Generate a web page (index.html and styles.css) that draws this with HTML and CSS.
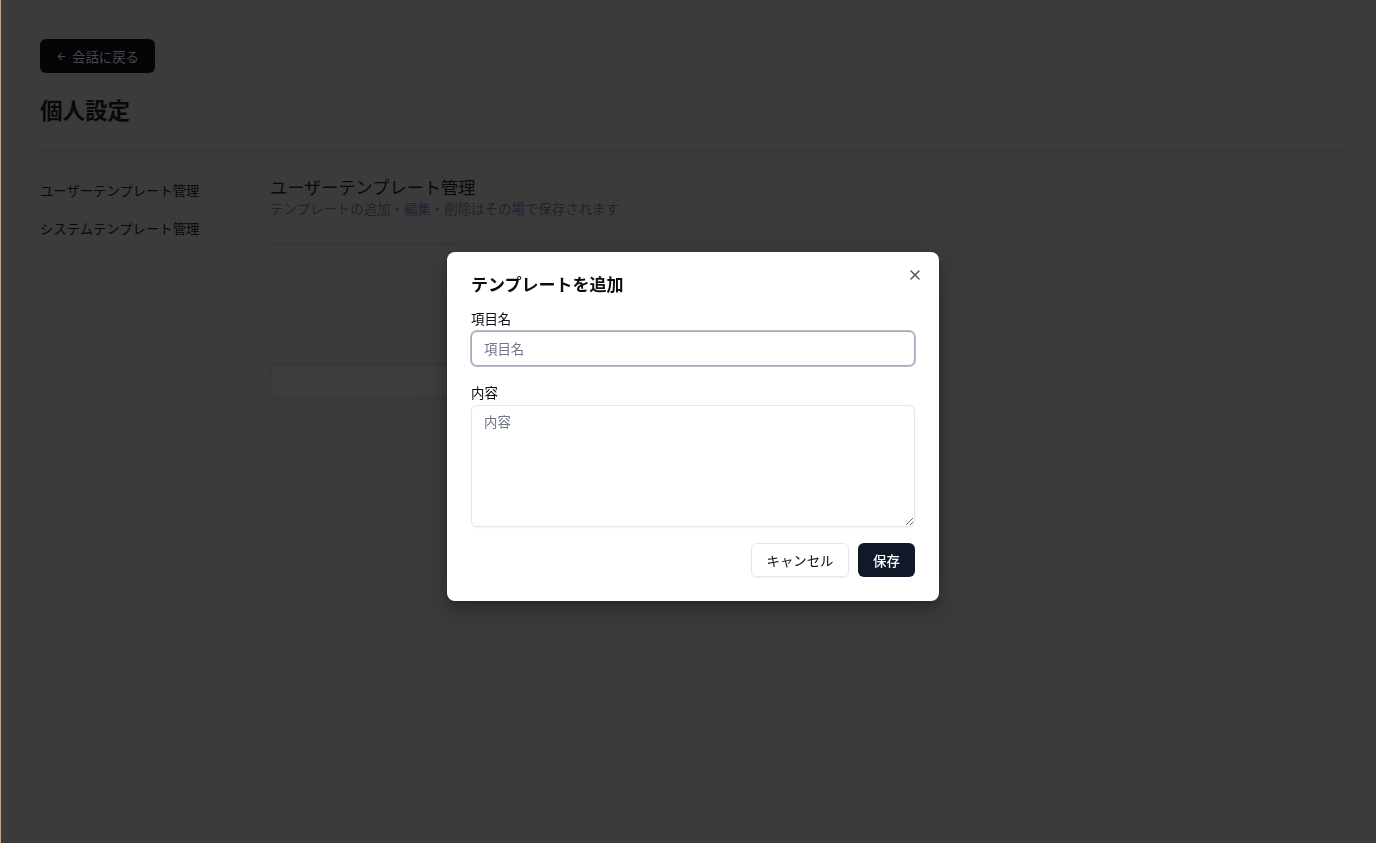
FILE: index.html
```html
<!DOCTYPE html>
<html lang="ja">
<head>
<meta charset="utf-8">
<title>個人設定</title>
<link rel="stylesheet" href="styles.css">
</head>
<body>
<div class="page">
  <button class="back-btn" type="button">
    <svg class="back-icon" viewBox="0 0 24 24" fill="none" stroke="currentColor" stroke-width="2.4" stroke-linecap="round" stroke-linejoin="round"><path d="m12 19-7-7 7-7"/><path d="M19 12H5"/></svg>
    <span>会話に戻る</span>
  </button>
  <h1 class="page-title">個人設定</h1>
  <div class="layout">
    <nav class="sidenav">
      <a class="nav-item">ユーザーテンプレート管理</a>
      <a class="nav-item">システムテンプレート管理</a>
    </nav>
    <section class="content">
      <div class="content-head">
        <h2 class="content-title">ユーザーテンプレート管理</h2>
        <p class="content-sub">テンプレートの追加・編集・削除はその場で保存されます</p>
      </div>
      <div class="list-box"></div>
    </section>
  </div>
</div>

<div class="overlay">
  <div class="modal" role="dialog">
    <button class="close-btn" type="button" aria-label="閉じる">
      <svg viewBox="0 0 24 24" fill="none" stroke="currentColor" stroke-width="2" stroke-linecap="round"><path d="M18 6 6 18"/><path d="m6 6 12 12"/></svg>
    </button>
    <h3 class="modal-title">テンプレートを追加</h3>
    <div class="field">
      <label class="field-label">項目名</label>
      <input class="input focused" type="text" placeholder="項目名">
    </div>
    <div class="field">
      <label class="field-label">内容</label>
      <textarea class="textarea" placeholder="内容"></textarea>
    </div>
    <div class="modal-footer">
      <button class="btn btn-outline" type="button">キャンセル</button>
      <button class="btn btn-primary" type="button">保存</button>
    </div>
  </div>
</div>
</body>
</html>
```

FILE: styles.css
```css
* { box-sizing: border-box; }

html, body {
  margin: 0;
  height: 100%;
}

body {
  background: #3b3b3b;
  border-left: 1px solid #c9a18f;
  font-family: "Noto Sans CJK JP", "Noto Sans", sans-serif;
  color: #0e0e10;
  overflow: hidden;
}

.page {
  padding: 39px 29px 0 39px;
}

.back-btn {
  display: inline-flex;
  align-items: center;
  gap: 5px;
  height: 34px;
  padding: 0 16px;
  border: 0;
  border-radius: 6px;
  background: #050507;
  color: #48484d;
  font-family: inherit;
  font-size: 13.4px;
  line-height: 20px;
  white-space: nowrap;
}

.back-icon {
  width: 11px;
  height: 11px;
}

.page-title {
  margin: 20px 0 0;
  font-size: 22.5px;
  line-height: 32px;
  font-weight: 700;
  color: #09090b;
  padding-bottom: 25px;
  border-bottom: 1px solid #343434;
}

.layout {
  display: grid;
  grid-template-columns: 230px 646px;
  padding-top: 24px;
}

.sidenav {
  display: flex;
  flex-direction: column;
  gap: 6px;
}

.nav-item {
  display: block;
  padding: 6px 0;
  font-size: 13.35px;
  line-height: 20px;
  color: #0a0a0c;
  white-space: nowrap;
}

.content-head {
  padding-bottom: 26px;
  border-bottom: 1px solid #343434;
}

.content-title {
  margin: 0;
  font-size: 17.2px;
  line-height: 24px;
  font-weight: 400;
  color: #09090b;
}

.content-sub {
  margin: -1px 0 0;
  font-size: 13.45px;
  line-height: 20px;
  color: #1f2330;
  white-space: nowrap;
}

.list-box {
  margin-top: 119px;
  height: 35px;
  border: 1px solid #343434;
  border-radius: 7px;
  background: #3d3d3d;
}

/* modal */
.overlay {
  position: fixed;
  inset: 0;
  display: flex;
  align-items: center;
  justify-content: center;
  padding: 10px 0 0 10px;
}

.modal {
  position: relative;
  width: 492px;
  padding: 20px 24px 24px;
  background: #ffffff;
  border-radius: 8px;
  box-shadow: 0 10px 25px rgba(0, 0, 0, 0.25), 0 4px 8px rgba(0, 0, 0, 0.15);
}

.close-btn {
  position: absolute;
  top: 15px;
  right: 16px;
  width: 16px;
  height: 16px;
  padding: 0;
  border: 0;
  background: transparent;
  color: #4b5060;
  display: flex;
}

.close-btn svg {
  width: 16px;
  height: 16px;
}

.modal-title {
  margin: 0 0 12px;
  font-size: 17px;
  line-height: 24px;
  font-weight: 700;
  color: #0b0d12;
}

.field {
  display: flex;
  flex-direction: column;
  gap: 3px;
  margin-bottom: 16px;
}

.field-label {
  font-size: 13.4px;
  line-height: 20px;
  color: #0b0d12;
}

.input,
.textarea {
  width: 100%;
  border: 1px solid #e4e7ec;
  border-radius: 6px;
  padding: 0 12px;
  font-family: inherit;
  font-size: 13.4px;
  color: #111827;
  background: #ffffff;
  outline: none;
}

.input {
  height: 35px;
  padding-bottom: 1px;
}

.input.focused {
  border-color: #a2abbd;
  box-shadow: 0 0 0 1px #b7bfcd;
}

.textarea {
  display: block;
  height: 122px;
  padding-top: 5px;
  line-height: 20px;
  resize: vertical;
  box-shadow: 0 1px 2px rgba(0, 0, 0, 0.05);
}

.input::placeholder,
.textarea::placeholder {
  color: #717784;
}

.modal-footer {
  display: flex;
  justify-content: flex-end;
  gap: 9px;
}

.btn {
  height: 34px;
  padding: 0 12px;
  border-radius: 6px;
  font-family: inherit;
  font-size: 13.4px;
  line-height: 20px;
  white-space: nowrap;
}

.btn-outline {
  width: 98px;
  border: 1px solid #e4e7ec;
  background: #ffffff;
  color: #0b0d12;
  box-shadow: 0 1px 2px rgba(0, 0, 0, 0.05);
}

.btn-primary {
  width: 57px;
  border: 0;
  background: #111827;
  color: #ffffff;
  font-weight: 500;
}
```
